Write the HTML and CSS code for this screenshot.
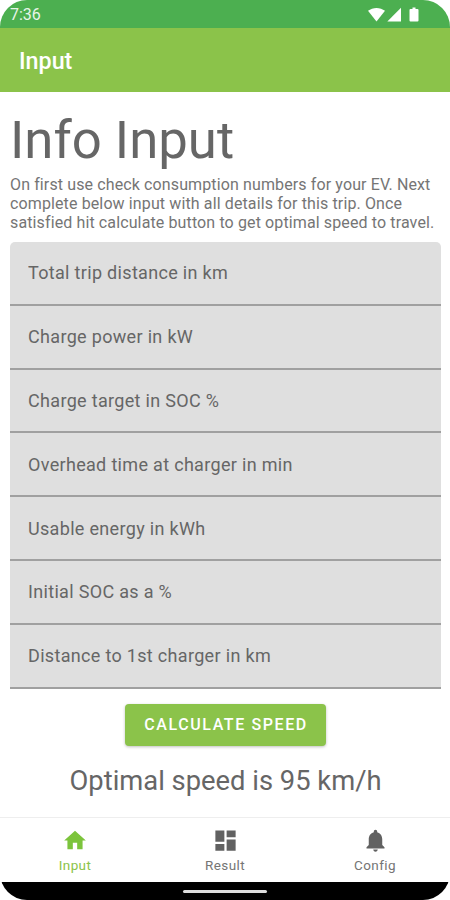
FILE: index.html
```
<!DOCTYPE html>
<html lang="en">
<head>
  <meta charset="UTF-8" />
  <meta name="viewport" content="width=device-width, initial-scale=1" />
  <title>Input</title>
  <link rel="stylesheet" href="styles.css">
</head>
<body>
  <div class="phone">
    <div class="status-bar">
      <span class="time">7:36</span>
      <svg class="status-icons" width="52" height="16" viewBox="0 0 52 16">
        <path d="M0 3.8C4.8-.1 12.2-.1 17 3.8L8.500 14.500z" />
        <path d="M33 .8V14.500H19.300z" />
        <path d="M42.500 2h2V.5h3V2h2q1 0 1 1v10.500q0 1-1 1h-7q-1 0-1-1V3q0-1 1-1z" />
      </svg>
    </div>

    <header class="app-bar">Input</header>

    <main class="content">
      <h1>Info Input</h1>
      <p class="intro">On first use check consumption numbers for your EV. Next<br>complete below input with all details for this trip. Once<br>satisfied hit calculate button to get optimal speed to travel.</p>

      <form class="trip-form">
        <input type="text" name="distance" placeholder="Total trip distance in km" />
        <input type="text" name="power" placeholder="Charge power in kW" />
        <input type="text" name="target" placeholder="Charge target in SOC %" />
        <input type="text" name="overhead" placeholder="Overhead time at charger in min" />
        <input type="text" name="energy" placeholder="Usable energy in kWh" />
        <input type="text" name="initial" placeholder="Initial SOC as a %" />
        <input type="text" name="first" placeholder="Distance to 1st charger in km" />
        <button type="button">CALCULATE SPEED</button>
      </form>

      <p class="result">Optimal speed is 95 km/h</p>
    </main>

    <nav class="bottom-nav">
      <a class="nav-item active">
        <svg width="26" height="27" viewBox="0 0 24 24"><path d="M10 20v-6h4v6h5v-8h3L12 3 2 12h3v8z" /></svg>
        <span>Input</span>
      </a>
      <a class="nav-item">
        <svg width="27" height="27" viewBox="0 0 24 24"><path d="M3 13h8V3H3v10zm0 8h8v-6H3v6zm10 0h8V11h-8v10zm0-18v6h8V3h-8z" /></svg>
        <span>Result</span>
      </a>
      <a class="nav-item">
        <svg width="27" height="27" viewBox="0 0 24 24"><path d="M12 22c1.100 0 2-.9 2-2h-4c0 1.100.9 2 2 2zm6-6v-5c0-3.070-1.640-5.640-4.500-6.320V4c0-.83-.67-1.500-1.500-1.500s-1.500.67-1.500 1.500v.68C7.630 5.360 6 7.920 6 11v5l-2 2v1h16v-1l-2-2z" /></svg>
        <span>Config</span>
      </a>
    </nav>

    <div class="gesture-bar"><span class="handle"></span></div>
  </div>
</body>
</html>
```

FILE: styles.css
```
* {
  box-sizing: border-box;
}

body {
  margin: 0;
  background: #fff;
  font-family: Roboto, sans-serif;
  color: #666;
}

.phone {
  display: flex;
  flex-direction: column;
  width: 450px;
  height: 900px;
  overflow: hidden;
  border-radius: 27px;
  background: #fff;
}

.status-bar {
  display: flex;
  justify-content: space-between;
  height: 28px;
  padding: 5px 30px 0 10px;
  background: #4caf50;
  color: #e8f5e9;
}

.time {
  font-size: 16px;
  line-height: 19px;
}

.status-icons {
  margin-top: 2px;
  fill: #fff;
}

.app-bar {
  height: 64px;
  padding-left: 19px;
  background: #8bc34a;
  color: #fff;
  font-size: 23.300px;
  font-weight: 500;
  line-height: 66px;
}

.content {
  flex: 1;
  padding: 0 9px 0 10px;
}

h1 {
  margin: 16px 0 0;
  font-size: 52.700px;
  font-weight: 400;
  line-height: 64px;
}

.intro {
  margin: 3px 0 10px;
  color: #757575;
  font-size: 16px;
  line-height: 19px;
  letter-spacing: 0.12px;
  white-space: nowrap;
}

.trip-form {
  display: flex;
  flex-direction: column;
}

input {
  height: 63.800px;
  padding: 0 18px;
  border: none;
  border-bottom: 2px solid #a0a0a0;
  border-radius: 0;
  background: #dfdfdf;
  font-family: inherit;
  font-size: 18px;
  letter-spacing: 0.32px;
}

input:first-child {
  border-radius: 5px 5px 0 0;
}

input::placeholder {
  color: #666;
}

button {
  align-self: center;
  width: 201px;
  height: 42px;
  margin-top: 15px;
  padding: 0 0 0 1px;
  border: none;
  border-radius: 4px;
  background: #8bc34a;
  box-shadow: 0 1px 3px rgba(0, 0, 0, 0.25);
  color: #fff;
  font-family: inherit;
  font-size: 16px;
  font-weight: 500;
  letter-spacing: 1.600px;
}

.result {
  margin: 18px 0 0;
  font-size: 27.350px;
  line-height: 34px;
  text-align: center;
}

.bottom-nav {
  display: flex;
  height: 65px;
  border-top: 1px solid #eee;
}

.nav-item {
  display: flex;
  flex: 1;
  flex-direction: column;
  align-items: center;
  padding-top: 9px;
  color: #757575;
  font-size: 13.500px;
  line-height: 16px;
  letter-spacing: 0.4px;
}

.nav-item svg {
  margin-bottom: 3px;
  fill: #616161;
}

.nav-item.active {
  color: #8bc34a;
}

.nav-item.active svg {
  fill: #7cc43c;
}

.gesture-bar {
  display: flex;
  justify-content: center;
  height: 18px;
  padding-top: 8px;
  background: #000;
}

.handle {
  width: 84px;
  height: 3px;
  border-radius: 2px;
  background: #ddd;
}
```
